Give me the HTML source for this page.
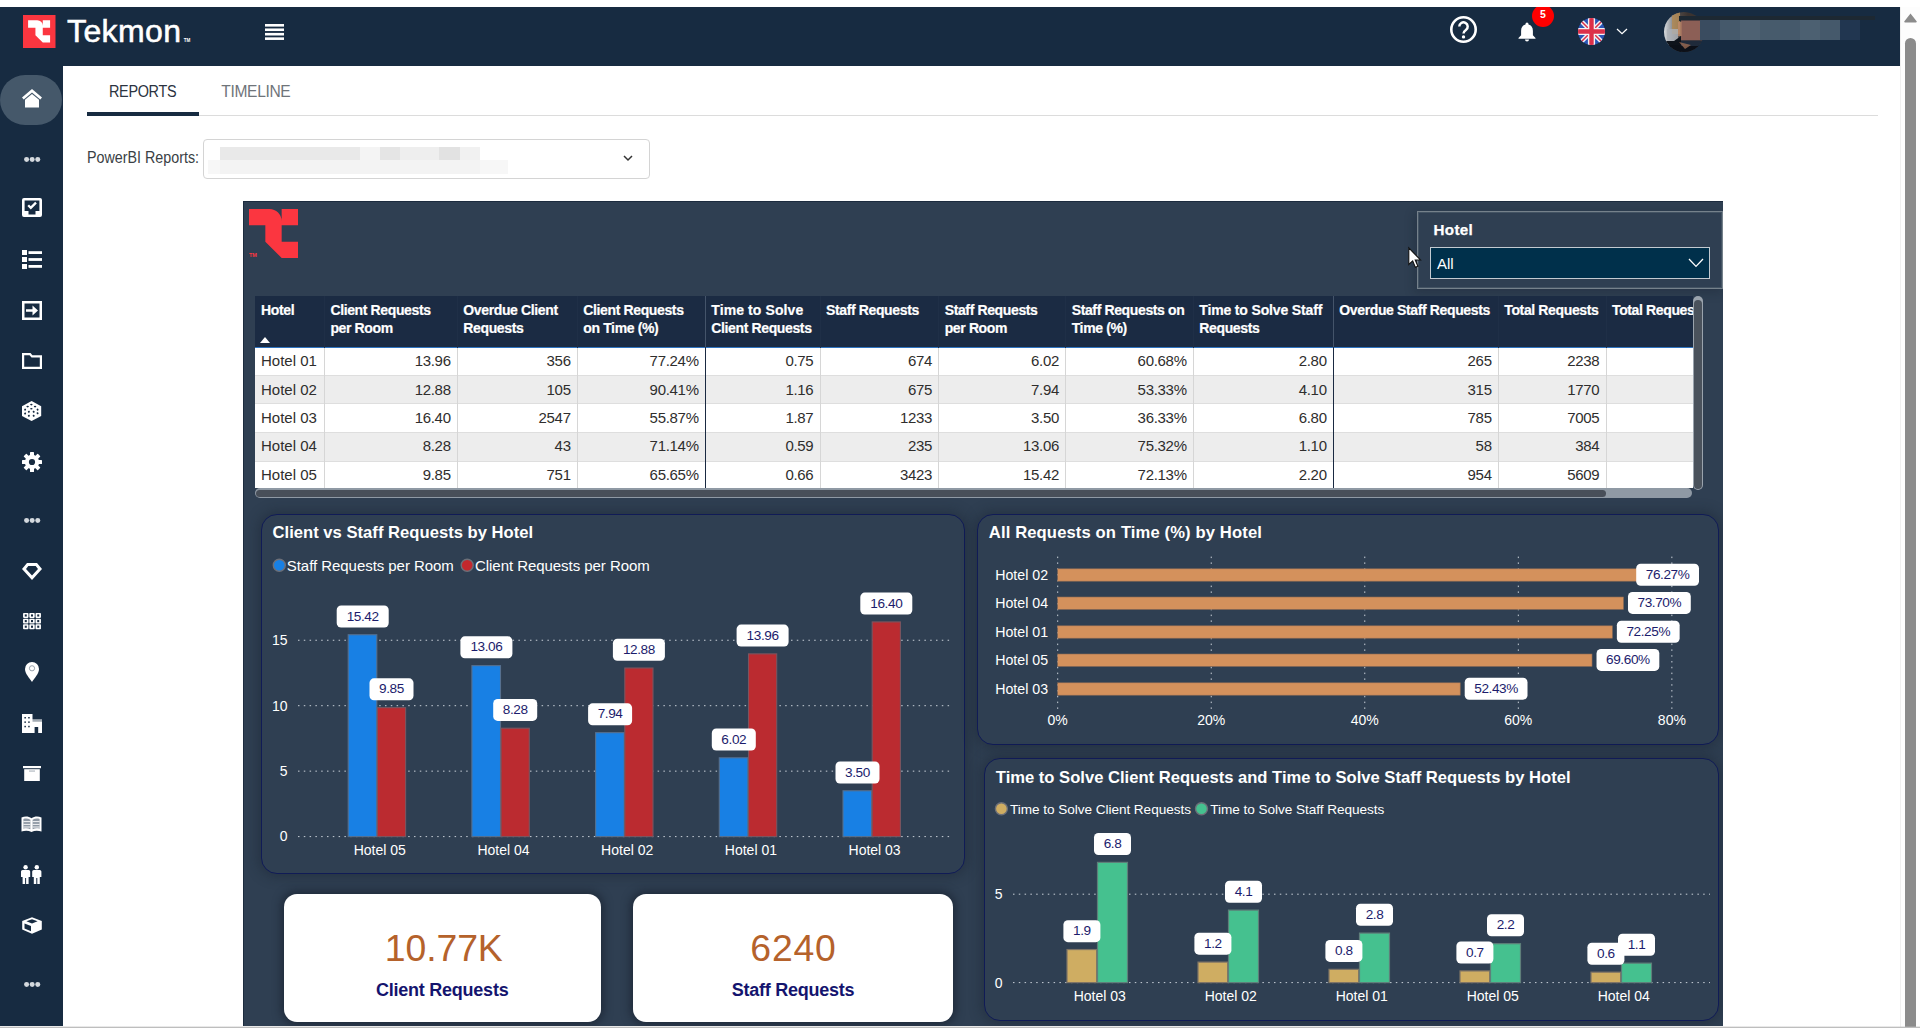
<!DOCTYPE html><html lang="en"><head><meta charset="utf-8"><title>Tekmon - Reports</title><style>
*{box-sizing:border-box;margin:0;padding:0}
html,body{width:1920px;height:1028px;overflow:hidden;background:#fff;font-family:"Liberation Sans", sans-serif;}
.abs{position:absolute}
#hdr{position:absolute;left:0;top:7px;width:1900px;height:59px;background:#172b41;overflow:hidden}
#side{position:absolute;left:0;top:66px;width:63px;height:960px;background:#172b41}
#sb{position:absolute;left:1900px;top:7px;width:20px;height:1021px;background:#fdfdfd;border-left:1px solid #efefef}
#thumb{position:absolute;left:1905px;top:38px;width:11px;height:1000px;border-radius:6px;background:#8b8b8b}
#botline{position:absolute;left:0;top:1026px;width:1920px;height:2px;background:linear-gradient(rgba(190,190,190,.35) 50%,#bebebe 50%)}
.t{position:absolute;white-space:nowrap;line-height:20px}
svg{position:absolute;overflow:visible}
svg text{font-family:"Liberation Sans", sans-serif;}
#report{position:absolute;left:243px;top:201px;width:1480px;height:825px;background:#2f3f52;overflow:hidden;border-left:1px solid #1c2b3e;border-top:1px solid #1c2b3e}
.panel{position:absolute;border:1px solid #101b56;border-radius:16px;background:#2f3f52;box-shadow:0 0 13px 2px rgba(22,30,42,.42)}
.card{position:absolute;background:#fff;border-radius:13px;box-shadow:0 0 9px 3px rgba(20,28,40,.55)}
</style></head><body>
<div id="hdr">
<svg style="left:23px;top:8px" width="33" height="33" viewBox="0 0 33 33"><rect width="32.5" height="33" fill="#fb3640"/><path transform="translate(5.1 5.2) scale(0.4583 0.4667)" d="M0 0 H20 A12 12 0 0 1 32 12 V0 H48 V16 H32 V32 H48 V48 H32 L16 32 V16 H0 Z" fill="#fff"/></svg>
<div class="t" style="left:67px;top:14.00px;font-size:32px;color:#fff;font-weight:normal;letter-spacing:0.4px;-webkit-text-stroke:0.55px #fff;">Tekmon</div>
<div class="t" style="left:183.8px;top:23.80px;font-size:4.6px;color:#fff;font-weight:bold;">TM</div>
<svg style="left:265px;top:17px" width="19" height="16" viewBox="0 0 19 16"><g fill="#fff"><rect y="0" width="19" height="2.6"/><rect y="4.45" width="19" height="2.6"/><rect y="8.9" width="19" height="2.6"/><rect y="13.35" width="19" height="2.6"/></g></svg>
<svg style="left:1449px;top:8px" width="29" height="29" viewBox="0 0 29 29"><circle cx="14.5" cy="14.5" r="12.2" fill="none" stroke="#fff" stroke-width="2.6"/><path d="M10.3 11.6 a4.2 4.2 0 1 1 6.6 3.4 c-1.6 1.1 -2.4 1.7 -2.4 3.6" fill="none" stroke="#fff" stroke-width="2.5" stroke-linecap="butt"/><circle cx="14.5" cy="21.9" r="1.7" fill="#fff"/></svg>
<svg style="left:1517px;top:15px" width="20" height="20" viewBox="0 0 20 20"><path d="M10 0.6 a1.5 1.5 0 0 1 1.5 1.5 v0.5 c2.9 0.7 4.4 3.1 4.4 6.1 v4.6 l2.6 2.6 v0.9 H1.5 v-0.9 l2.6 -2.6 V8.7 c0 -3 1.5 -5.4 4.4 -6.1 V2.1 A1.5 1.5 0 0 1 10 0.6 Z M8 17.6 h4 a2 2 0 0 1 -4 0 Z" fill="#fff"/></svg>
<div class="abs" style="left:1532px;top:-2px;width:22px;height:22px;border-radius:11px;background:#fe0000"></div>
<div class="t" style="left:1532px;top:-2.80px;font-size:10.5px;color:#fff;font-weight:bold;width:22px;text-align:center;">5</div>
<svg style="left:1578px;top:11px" width="27" height="27" viewBox="0 0 27 27"><defs><clipPath id="fc"><circle cx="13.5" cy="13.5" r="13.5"/></clipPath></defs><g clip-path="url(#fc)"><rect width="27" height="27" fill="#2a55b5"/><path d="M0 0 L27 27 M27 0 L0 27" stroke="#f3f3f5" stroke-width="4.4"/><path d="M0 0 L27 27 M27 0 L0 27" stroke="#d9304a" stroke-width="1.5"/><path d="M13.5 0 V27 M0 13.5 H27" stroke="#f3f3f5" stroke-width="7.2"/><path d="M13.5 0 V27 M0 13.5 H27" stroke="#dc3049" stroke-width="4.4"/></g></svg>
<svg style="left:1616px;top:21px" width="12" height="7" viewBox="0 0 12 7"><path d="M1 1 L6 5.6 L11 1" fill="none" stroke="#fff" stroke-width="1.25"/></svg>
<svg style="left:1664px;top:4.5px" width="40" height="40" viewBox="0 0 40 40"><defs><clipPath id="ac"><circle cx="20" cy="20" r="20"/></clipPath><linearGradient id="ag" x1="0" x2="1" y1="0" y2="0"><stop offset="0" stop-color="#d9dcdf"/><stop offset=".2" stop-color="#8f9296"/><stop offset=".42" stop-color="#4a4340"/><stop offset=".6" stop-color="#3b3330"/></linearGradient></defs><g clip-path="url(#ac)"><rect width="40" height="40" fill="url(#ag)"/><rect x="8" y="0" width="8" height="22" fill="#b08a55" opacity=".85"/><rect x="3" y="17" width="11" height="12" fill="#aeb2b8" opacity=".8"/><path d="M0 29 H10 L17 24 V40 H0 Z" fill="#0e131b"/><rect x="0" y="33" width="40" height="7" fill="#0c1018"/><rect x="15" y="4" width="25" height="5" fill="#1a2530"/><rect x="17" y="8.5" width="23" height="20" fill="#8c5f56"/><rect x="14" y="10" width="3.5" height="14" fill="#c08a6a" opacity=".8"/><rect x="17" y="28.5" width="23" height="5.5" fill="#1f2a3a"/><path d="M15 30 L21 37 L27 33 Z" fill="#9a6a52" opacity=".8"/></g></svg>
<div class="abs" style="left:1700px;top:13px;width:20px;height:20px;background:#3a4c60"></div>
<div class="abs" style="left:1720px;top:13px;width:20px;height:20px;background:#45596b"></div>
<div class="abs" style="left:1740px;top:13px;width:20px;height:20px;background:#4e6172"></div>
<div class="abs" style="left:1760px;top:13px;width:20px;height:20px;background:#475b6c"></div>
<div class="abs" style="left:1780px;top:13px;width:20px;height:20px;background:#45596b"></div>
<div class="abs" style="left:1800px;top:13px;width:20px;height:20px;background:#4c6071"></div>
<div class="abs" style="left:1820px;top:13px;width:20px;height:20px;background:#45596b"></div>
<div class="abs" style="left:1840px;top:13px;width:20px;height:20px;background:#213650"></div>
<div class="abs" style="left:1679px;top:9px;width:196px;height:4px;background:#1d2832"></div>
</div>
<div id="side"></div>
<div class="abs" style="left:0;top:75px;width:62px;height:50px;border-radius:25px;background:#45586a"></div>
<svg style="left:21.8px;top:89.1px" width="20" height="18.4" viewBox="0 0 20 18.4"><path d="M10 0 L20 8.6 L18.3 10.6 L10 3.6 L1.7 10.6 L0 8.6 Z" fill="#fff"/><path d="M10 4.9 L17 10.8 V18.4 H3 V10.8 Z" fill="#fff"/></svg>
<svg style="left:23.5px;top:156.6px" width="16.4" height="5.2" viewBox="0 0 16.4 5.2"><g fill="#d4d9de"><circle cx="2.6" cy="2.6" r="2.5"/><circle cx="8.2" cy="2.6" r="2.5"/><circle cx="13.8" cy="2.6" r="2.5"/></g></svg>
<svg style="left:21.5px;top:198.0px" width="20" height="19" viewBox="0 0 20 19"><path d="M2 0 H18 a2 2 0 0 1 2 2 V17 a2 2 0 0 1 -2 2 H2 a2 2 0 0 1 -2 -2 V2 a2 2 0 0 1 2 -2 Z M2.6 2.6 V13 H6.5 V16.4 H13.5 V13 H17.4 V2.6 Z" fill="#fff" fill-rule="evenodd"/><path d="M6.2 7.3 L8.8 9.9 L14 4.6" fill="none" stroke="#fff" stroke-width="2.3"/></svg>
<svg style="left:21.5px;top:249.5px" width="20" height="19" viewBox="0 0 20 19"><g fill="#fff"><rect x="0" y="0" width="5" height="5"/><rect x="0" y="7" width="5" height="5"/><rect x="0" y="14" width="5" height="5"/><rect x="6.5" y="1.2" width="13.5" height="2.8"/><rect x="6.5" y="8.1" width="13.5" height="2.8"/><rect x="6.5" y="15" width="13.5" height="2.8"/></g></svg>
<svg style="left:21.5px;top:300.5px" width="20" height="19" viewBox="0 0 20 19"><path d="M0 0 H20 V19 H0 Z M2.5 2.5 V16.5 H17.5 V2.5 Z" fill="#fff" fill-rule="evenodd"/><path d="M4 8.2 H10.5 V4.6 L16 9.5 L10.5 14.4 V10.8 H4 Z" fill="#fff"/></svg>
<svg style="left:21.5px;top:352.5px" width="20" height="16" viewBox="0 0 20 16"><path d="M1.1 1.1 H8 L10 3.4 H18.9 V14.9 H1.1 Z" fill="none" stroke="#fff" stroke-width="2.2" stroke-linejoin="miter"/></svg>
<svg style="left:21.6px;top:400.8px" width="19.2" height="20.1" viewBox="0 0 19.2 20.1"><path d="M9.6 0 L19.2 5.2 V14.9 L9.6 20.1 L0 14.9 V5.2 Z" fill="#fff"/><g fill="#172b41"><ellipse cx="9.35" cy="3.6" rx="1.25" ry="0.8"/><ellipse cx="5.6" cy="5.6" rx="1.25" ry="0.8"/><ellipse cx="13.1" cy="5.6" rx="1.25" ry="0.8"/><ellipse cx="9.35" cy="7.8" rx="1.25" ry="0.8"/><ellipse cx="3.1" cy="8.6" rx="0.95" ry="1.05" transform="rotate(28 3.1 8.6)"/><ellipse cx="6.85" cy="10.75" rx="0.95" ry="1.05" transform="rotate(28 6.85 10.75)"/><ellipse cx="3.1" cy="12.5" rx="0.95" ry="1.05" transform="rotate(28 3.1 12.5)"/><ellipse cx="6.85" cy="14.8" rx="0.95" ry="1.05" transform="rotate(28 6.85 14.8)"/><ellipse cx="15.6" cy="8.6" rx="0.95" ry="1.05" transform="rotate(-28 15.6 8.6)"/><ellipse cx="11.7" cy="10.75" rx="0.95" ry="1.05" transform="rotate(-28 11.7 10.75)"/><ellipse cx="15.6" cy="12.3" rx="0.95" ry="1.05" transform="rotate(-28 15.6 12.3)"/><ellipse cx="11.7" cy="14.8" rx="0.95" ry="1.05" transform="rotate(-28 11.7 14.8)"/></g></svg>
<svg style="left:21.5px;top:452.0px" width="20" height="20" viewBox="0 0 20 20"><g fill="#fff"><rect x="8" y="0" width="4" height="20" rx="0.6" transform="rotate(0 10 10)"/><rect x="8" y="0" width="4" height="20" rx="0.6" transform="rotate(45 10 10)"/><rect x="8" y="0" width="4" height="20" rx="0.6" transform="rotate(90 10 10)"/><rect x="8" y="0" width="4" height="20" rx="0.6" transform="rotate(135 10 10)"/><circle cx="10" cy="10" r="7.2"/></g><circle cx="10" cy="10" r="3.1" fill="#172b41"/></svg>
<svg style="left:23.5px;top:518.4px" width="16.4" height="5.2" viewBox="0 0 16.4 5.2"><g fill="#d4d9de"><circle cx="2.6" cy="2.6" r="2.5"/><circle cx="8.2" cy="2.6" r="2.5"/><circle cx="13.8" cy="2.6" r="2.5"/></g></svg>
<svg style="left:21.5px;top:562.5px" width="20" height="17" viewBox="0 0 20 17"><path d="M5 0 H15 L20 6 L10 17 L0 6 Z M6.3 3 L4 6 L10 12.6 L16 6 L13.7 3 Z" fill="#fff" fill-rule="evenodd"/></svg>
<svg style="left:22.5px;top:612.9px" width="18" height="16.2" viewBox="0 0 17.8 16.1"><g fill="#fff"><rect x="0.0" y="0.0" width="5.4" height="4.9" rx="0.8"/><rect x="6.2" y="0.0" width="5.4" height="4.9" rx="0.8"/><rect x="12.4" y="0.0" width="5.4" height="4.9" rx="0.8"/><rect x="0.0" y="5.6" width="5.4" height="4.9" rx="0.8"/><rect x="6.2" y="5.6" width="5.4" height="4.9" rx="0.8"/><rect x="12.4" y="5.6" width="5.4" height="4.9" rx="0.8"/><rect x="0.0" y="11.2" width="5.4" height="4.9" rx="0.8"/><rect x="6.2" y="11.2" width="5.4" height="4.9" rx="0.8"/><rect x="12.4" y="11.2" width="5.4" height="4.9" rx="0.8"/></g><g fill="#172b41"><rect x="1.7" y="1.4" width="2" height="2.1"/><rect x="7.9" y="1.4" width="2" height="2.1"/><rect x="14.1" y="1.4" width="2" height="2.1"/><rect x="1.7" y="7.0" width="2" height="2.1"/><rect x="7.9" y="7.0" width="2" height="2.1"/><rect x="14.1" y="7.0" width="2" height="2.1"/><rect x="1.7" y="12.6" width="2" height="2.1"/><rect x="7.9" y="12.6" width="2" height="2.1"/><rect x="14.1" y="12.6" width="2" height="2.1"/></g></svg>
<svg style="left:24.5px;top:662.0px" width="14" height="20" viewBox="0 0 14 20"><path d="M7 0 a7 7 0 0 1 7 7 c0 4.6 -4.6 9.3 -7 13 c-2.4 -3.7 -7 -8.4 -7 -13 a7 7 0 0 1 7 -7 Z" fill="#fff"/><circle cx="7" cy="6.3" r="2.6" fill="#fff" stroke="#8d97a3" stroke-width="0.9"/></svg>
<svg style="left:21.5px;top:713.5px" width="20" height="19" viewBox="0 0 20 19"><path d="M0 0 H10.5 V5.5 H20 V19 H16.2 V13 H12.6 V19 H0 Z" fill="#fff"/><g fill="#172b41"><rect x="2.4" y="3" width="1.5" height="1.5"/><rect x="6.2" y="3" width="1.5" height="1.5"/><rect x="2.4" y="7.4" width="1.5" height="1.5"/><rect x="6.2" y="7.4" width="1.5" height="1.5"/><rect x="2.4" y="11.8" width="1.5" height="1.5"/><rect x="6.2" y="11.8" width="1.5" height="1.5"/><rect x="10.5" y="6.6" width="9.5" height="0.7"/></g></svg>
<svg style="left:22.5px;top:765.5px" width="18" height="15" viewBox="0 0 18 15"><rect x="0" y="0" width="18" height="2.2" fill="#fff"/><rect x="1.2" y="3.2" width="15.6" height="11.8" fill="#fff"/><rect x="6" y="4.6" width="6" height="0.9" fill="#9aa3ad"/></svg>
<svg style="left:21.0px;top:816.0px" width="21" height="16" viewBox="0 0 21 16"><path d="M0.5 1.6 C4 0 7.5 0.3 10.5 2.2 C13.5 0.3 17 0 20.5 1.6 V15.6 C17 14.2 13.5 14.4 10.5 16 C7.5 14.4 4 14.2 0.5 15.6 Z" fill="#fff"/><path d="M2.4 3 C4.8 2.2 7 2.5 9.4 3.7 V13.2 C7 12.2 4.8 12 2.4 12.7 Z M18.6 3 C16.2 2.2 14 2.5 11.6 3.7 V13.2 C14 12.2 16.2 12 18.6 12.7 Z" fill="#8e98a4"/><g stroke="#fff" stroke-width="0.9"><path d="M2.4 5.6 H9.4 M2.4 8.4 H9.4 M2.4 11 H9.4 M11.6 5.6 H18.6 M11.6 8.4 H18.6 M11.6 11 H18.6"/></g></svg>
<svg style="left:21.3px;top:864.5px" width="20.4" height="19" viewBox="0 0 20.4 19"><g fill="#fff"><circle cx="4.6" cy="2.2" r="2.2"/><path d="M1.6 5 H7.6 a1.6 1.6 0 0 1 1.6 1.6 V12 H7.6 V19 H5.1 V13 H4.1 V19 H1.6 V12 H0 V6.6 A1.6 1.6 0 0 1 1.6 5 Z"/><g transform="translate(11.2 0)"><circle cx="4.6" cy="2.2" r="2.2"/><path d="M1.6 5 H7.6 a1.6 1.6 0 0 1 1.6 1.6 V12 H7.6 V19 H5.1 V13 H4.1 V19 H1.6 V12 H0 V6.6 A1.6 1.6 0 0 1 1.6 5 Z"/></g></g></svg>
<svg style="left:21.5px;top:916.5px" width="20" height="17" viewBox="0 0 20 17"><path d="M10 0.2 L19.8 4 V12.6 L10 16.8 L0.2 12.6 V4 Z" fill="#fff"/><path d="M2.5 6.4 L9 9.1 V14.2 L2.5 11.5 Z" fill="#172b41"/><path d="M4.4 4.3 L10 2.2 L15.6 4.3 L10 6.6 Z" fill="#172b41"/></svg>
<svg style="left:23.5px;top:981.9px" width="16.4" height="5.2" viewBox="0 0 16.4 5.2"><g fill="#d4d9de"><circle cx="2.6" cy="2.6" r="2.5"/><circle cx="8.2" cy="2.6" r="2.5"/><circle cx="13.8" cy="2.6" r="2.5"/></g></svg>
<div id="sb"></div><div id="thumb"></div>
<svg style="left:1904px;top:13px" width="13" height="10" viewBox="0 0 13 10"><path d="M6.5 0.6 L12.6 8.2 a0.8 0.8 0 0 1 -0.6 1.3 H1 a0.8 0.8 0 0 1 -0.6 -1.3 Z" fill="#8b8b8b"/></svg>
<div class="abs" style="left:87px;top:115px;width:1791px;height:1px;background:#dcdcdc"></div>
<div class="abs" style="left:87px;top:112px;width:112px;height:4px;background:#172b41"></div>
<div class="t" style="left:108.6px;top:81.60px;font-size:15.6px;color:#2b3340;font-weight:normal;letter-spacing:-0.35px;transform:scaleX(0.925);transform-origin:0 50%;">REPORTS</div>
<div class="t" style="left:221.3px;top:81.60px;font-size:15.6px;color:#6f747a;font-weight:normal;letter-spacing:-0.35px;">TIMELINE</div>
<div class="t" style="left:86.6px;top:147.60px;font-size:15.6px;color:#3a3f45;font-weight:normal;transform:scaleX(0.917);transform-origin:0 50%;">PowerBI Reports:</div>
<div class="abs" style="left:203px;top:139px;width:447px;height:40px;border:1px solid #d4d4d4;border-radius:4px;background:#fff"></div>
<div class="abs" style="left:220px;top:147px;width:140px;height:12.5px;background:#e9e9e9"></div>
<div class="abs" style="left:360px;top:147px;width:20px;height:12.5px;background:#f4f4f4"></div>
<div class="abs" style="left:380px;top:147px;width:20px;height:12.5px;background:#e5e5e5"></div>
<div class="abs" style="left:400px;top:147px;width:39px;height:12.5px;background:#eeeeee"></div>
<div class="abs" style="left:439px;top:147px;width:21px;height:12.5px;background:#e2e2e2"></div>
<div class="abs" style="left:460px;top:147px;width:20px;height:12.5px;background:#f1f1f1"></div>
<div class="abs" style="left:208px;top:159.5px;width:300px;height:14px;background:#f7f7f7"></div>
<div class="abs" style="left:220px;top:159.5px;width:260px;height:14px;background:#f3f3f3"></div>
<svg style="left:623px;top:155px" width="10" height="7" viewBox="0 0 10 7"><path d="M1 1 L5 5 L9 1" fill="none" stroke="#333" stroke-width="1.5"/></svg>
<div id="report">
<svg style="left:5px;top:7px" width="49" height="49" viewBox="0 0 48 48"><path d="M0 0 H20 A12 12 0 0 1 32 12 V0 H48 V16 H32 V32 H48 V48 H32 L16 32 V16 H0 Z" fill="#fb3640"/></svg>
<div class="t" style="left:5px;top:42.90px;font-size:5.5px;color:#fb3640;font-weight:bold;">TM</div>
<div class="abs" style="left:1173px;top:9px;width:305.5999999999999px;height:78.39999999999998px;border:1px solid #75818b;background:#2f3f52;box-shadow:-2px 3px 9px 1px rgba(20,28,40,.25), inset 0 0 0 1px rgba(117,129,139,.3)"></div>
<div class="t" style="left:1189.6px;top:17.80px;font-size:15.2px;color:#fff;font-weight:bold;letter-spacing:0.3px;-webkit-text-stroke:0.25px #fff;">Hotel</div>
<div class="abs" style="left:1186px;top:45px;width:280px;height:32px;border:1px solid #c3cad1;background:#00304b"></div>
<div class="t" style="left:1193px;top:52.10px;font-size:15px;color:#fff;font-weight:normal;">All</div>
<svg style="left:1444px;top:56px" width="16" height="10" viewBox="0 0 16 10"><path d="M1 1 L8 8.4 L15 1" fill="none" stroke="#fff" stroke-width="1.3"/></svg>
<svg style="left:1164.4px;top:44.80000000000001px" width="13.4" height="22.4" viewBox="0 0 12 20"><path d="M0.7 0.8 V15.6 L4.2 12.4 L6.6 18.2 L8.9 17.2 L6.5 11.6 H11.2 Z" fill="#fff" stroke="#111" stroke-width="1"/></svg>
<div class="abs" style="left:11px;top:94px;width:1437.5px;height:192px;overflow:hidden;background:#fff">
<div class="abs" style="left:0;top:0;width:1437.5px;height:51px;background:#1b2b43"></div>
<div class="abs" style="left:0;top:51px;width:1437.5px;height:1.5px;background:#2f74c0"></div>
<div class="abs" style="left:0;top:52px;width:1437.5px;height:27.5px;background:#fff"></div>
<div class="abs" style="left:0;top:79.5px;width:1437.5px;height:28.0px;background:#ededed"></div>
<div class="abs" style="left:0;top:107.5px;width:1437.5px;height:28.5px;background:#fff"></div>
<div class="abs" style="left:0;top:136px;width:1437.5px;height:29px;background:#ededed"></div>
<div class="abs" style="left:0;top:165px;width:1437.5px;height:29px;background:#fff"></div>
<div class="abs" style="left:0;top:79.0px;width:1437.5px;height:1px;background:#dedede"></div>
<div class="abs" style="left:0;top:107.0px;width:1437.5px;height:1px;background:#dedede"></div>
<div class="abs" style="left:0;top:135.5px;width:1437.5px;height:1px;background:#dedede"></div>
<div class="abs" style="left:0;top:164.5px;width:1437.5px;height:1px;background:#dedede"></div>
<div class="abs" style="left:68.89999999999998px;top:0;width:1px;height:52px;background:#1f2f47"></div>
<div class="abs" style="left:68.89999999999998px;top:52px;width:1px;height:150px;background:#d6d6d6"></div>
<div class="abs" style="left:201.8px;top:0;width:1px;height:52px;background:#1f2f47"></div>
<div class="abs" style="left:201.8px;top:52px;width:1px;height:150px;background:#d6d6d6"></div>
<div class="abs" style="left:321.79999999999995px;top:0;width:1px;height:52px;background:#1f2f47"></div>
<div class="abs" style="left:321.79999999999995px;top:52px;width:1px;height:150px;background:#d6d6d6"></div>
<div class="abs" style="left:449.79999999999995px;top:0;width:1px;height:52px;background:#1f2f47"></div>
<div class="abs" style="left:449.54999999999995px;top:52px;width:1.5px;height:150px;background:#1a2a42"></div>
<div class="abs" style="left:449.54999999999995px;top:0px;width:1.5px;height:51px;background:#44546a"></div>
<div class="abs" style="left:564.5px;top:0;width:1px;height:52px;background:#1f2f47"></div>
<div class="abs" style="left:564.5px;top:52px;width:1px;height:150px;background:#d6d6d6"></div>
<div class="abs" style="left:683.2px;top:0;width:1px;height:52px;background:#1f2f47"></div>
<div class="abs" style="left:683.2px;top:52px;width:1px;height:150px;background:#d6d6d6"></div>
<div class="abs" style="left:810.2px;top:0;width:1px;height:52px;background:#1f2f47"></div>
<div class="abs" style="left:810.2px;top:52px;width:1px;height:150px;background:#d6d6d6"></div>
<div class="abs" style="left:937.8px;top:0;width:1px;height:52px;background:#1f2f47"></div>
<div class="abs" style="left:937.8px;top:52px;width:1px;height:150px;background:#d6d6d6"></div>
<div class="abs" style="left:1077.8px;top:0;width:1px;height:52px;background:#1f2f47"></div>
<div class="abs" style="left:1077.55px;top:52px;width:1.5px;height:150px;background:#1a2a42"></div>
<div class="abs" style="left:1077.55px;top:0px;width:1.5px;height:51px;background:#44546a"></div>
<div class="abs" style="left:1242.8px;top:0;width:1px;height:52px;background:#1f2f47"></div>
<div class="abs" style="left:1242.8px;top:52px;width:1px;height:150px;background:#d6d6d6"></div>
<div class="abs" style="left:1350.5px;top:0;width:1px;height:52px;background:#1f2f47"></div>
<div class="abs" style="left:1350.5px;top:52px;width:1px;height:150px;background:#d6d6d6"></div>
<div class="t" style="left:6px;top:4.20px;font-size:14px;color:#fff;font-weight:bold;letter-spacing:-0.37px;-webkit-text-stroke:0.2px #fff;">Hotel</div>
<div class="t" style="left:75.39999999999998px;top:4.20px;font-size:14px;color:#fff;font-weight:bold;letter-spacing:-0.37px;-webkit-text-stroke:0.2px #fff;">Client Requests</div>
<div class="t" style="left:75.39999999999998px;top:22.20px;font-size:14px;color:#fff;font-weight:bold;letter-spacing:-0.37px;-webkit-text-stroke:0.2px #fff;">per Room</div>
<div class="t" style="left:208.3px;top:4.20px;font-size:14px;color:#fff;font-weight:bold;letter-spacing:-0.37px;-webkit-text-stroke:0.2px #fff;">Overdue Client</div>
<div class="t" style="left:208.3px;top:22.20px;font-size:14px;color:#fff;font-weight:bold;letter-spacing:-0.37px;-webkit-text-stroke:0.2px #fff;">Requests</div>
<div class="t" style="left:328.29999999999995px;top:4.20px;font-size:14px;color:#fff;font-weight:bold;letter-spacing:-0.37px;-webkit-text-stroke:0.2px #fff;">Client Requests</div>
<div class="t" style="left:328.29999999999995px;top:22.20px;font-size:14px;color:#fff;font-weight:bold;letter-spacing:-0.37px;-webkit-text-stroke:0.2px #fff;">on Time (%)</div>
<div class="t" style="left:456.29999999999995px;top:4.20px;font-size:14px;color:#fff;font-weight:bold;letter-spacing:0.1px;-webkit-text-stroke:0.2px #fff;">Time to Solve</div>
<div class="t" style="left:456.29999999999995px;top:22.20px;font-size:14px;color:#fff;font-weight:bold;letter-spacing:-0.37px;-webkit-text-stroke:0.2px #fff;">Client Requests</div>
<div class="t" style="left:571px;top:4.20px;font-size:14px;color:#fff;font-weight:bold;letter-spacing:-0.37px;-webkit-text-stroke:0.2px #fff;">Staff Requests</div>
<div class="t" style="left:689.7px;top:4.20px;font-size:14px;color:#fff;font-weight:bold;letter-spacing:-0.37px;-webkit-text-stroke:0.2px #fff;">Staff Requests</div>
<div class="t" style="left:689.7px;top:22.20px;font-size:14px;color:#fff;font-weight:bold;letter-spacing:-0.37px;-webkit-text-stroke:0.2px #fff;">per Room</div>
<div class="t" style="left:816.7px;top:4.20px;font-size:14px;color:#fff;font-weight:bold;letter-spacing:-0.37px;-webkit-text-stroke:0.2px #fff;">Staff Requests on</div>
<div class="t" style="left:816.7px;top:22.20px;font-size:14px;color:#fff;font-weight:bold;letter-spacing:-0.37px;-webkit-text-stroke:0.2px #fff;">Time (%)</div>
<div class="t" style="left:944.3px;top:4.20px;font-size:14px;color:#fff;font-weight:bold;letter-spacing:-0.15px;-webkit-text-stroke:0.2px #fff;">Time to Solve Staff</div>
<div class="t" style="left:944.3px;top:22.20px;font-size:14px;color:#fff;font-weight:bold;letter-spacing:-0.37px;-webkit-text-stroke:0.2px #fff;">Requests</div>
<div class="t" style="left:1084.3px;top:4.20px;font-size:14px;color:#fff;font-weight:bold;letter-spacing:-0.37px;-webkit-text-stroke:0.2px #fff;">Overdue Staff Requests</div>
<div class="t" style="left:1249.3px;top:4.20px;font-size:14px;color:#fff;font-weight:bold;letter-spacing:-0.37px;-webkit-text-stroke:0.2px #fff;">Total Requests</div>
<div class="t" style="left:1357px;top:4.20px;font-size:14px;color:#fff;font-weight:bold;letter-spacing:-0.37px;-webkit-text-stroke:0.2px #fff;">Total Requests</div>
<svg style="left:5.3px;top:40.5px" width="10" height="6" viewBox="0 0 10 6"><path d="M0 6 L5 0 L10 6 Z" fill="#fff"/></svg>
<div class="t" style="left:6px;top:54.80px;font-size:15px;color:#2f2e2d;font-weight:normal;">Hotel 01</div>
<div class="t" style="left:69.39999999999998px;top:54.80px;font-size:15px;color:#2f2e2d;font-weight:normal;letter-spacing:-0.3px;width:126.60000000000004px;text-align:right;padding-right:0.3px;">13.96</div>
<div class="t" style="left:202.3px;top:54.80px;font-size:15px;color:#2f2e2d;font-weight:normal;letter-spacing:-0.3px;width:113.69999999999995px;text-align:right;padding-right:0.3px;">356</div>
<div class="t" style="left:322.29999999999995px;top:54.80px;font-size:15px;color:#2f2e2d;font-weight:normal;letter-spacing:-0.3px;width:121.7px;text-align:right;padding-right:0.3px;">77.24%</div>
<div class="t" style="left:450.29999999999995px;top:54.80px;font-size:15px;color:#2f2e2d;font-weight:normal;letter-spacing:-0.3px;width:108.40000000000005px;text-align:right;padding-right:0.3px;">0.75</div>
<div class="t" style="left:565px;top:54.80px;font-size:15px;color:#2f2e2d;font-weight:normal;letter-spacing:-0.3px;width:112.40000000000005px;text-align:right;padding-right:0.3px;">674</div>
<div class="t" style="left:683.7px;top:54.80px;font-size:15px;color:#2f2e2d;font-weight:normal;letter-spacing:-0.3px;width:120.7px;text-align:right;padding-right:0.3px;">6.02</div>
<div class="t" style="left:810.7px;top:54.80px;font-size:15px;color:#2f2e2d;font-weight:normal;letter-spacing:-0.3px;width:121.29999999999991px;text-align:right;padding-right:0.3px;">60.68%</div>
<div class="t" style="left:938.3px;top:54.80px;font-size:15px;color:#2f2e2d;font-weight:normal;letter-spacing:-0.3px;width:133.7px;text-align:right;padding-right:0.3px;">2.80</div>
<div class="t" style="left:1078.3px;top:54.80px;font-size:15px;color:#2f2e2d;font-weight:normal;letter-spacing:-0.3px;width:158.7px;text-align:right;padding-right:0.3px;">265</div>
<div class="t" style="left:1243.3px;top:54.80px;font-size:15px;color:#2f2e2d;font-weight:normal;letter-spacing:-0.3px;width:101.40000000000005px;text-align:right;padding-right:0.3px;">2238</div>
<div class="t" style="left:6px;top:83.60px;font-size:15px;color:#2f2e2d;font-weight:normal;">Hotel 02</div>
<div class="t" style="left:69.39999999999998px;top:83.60px;font-size:15px;color:#2f2e2d;font-weight:normal;letter-spacing:-0.3px;width:126.60000000000004px;text-align:right;padding-right:0.3px;">12.88</div>
<div class="t" style="left:202.3px;top:83.60px;font-size:15px;color:#2f2e2d;font-weight:normal;letter-spacing:-0.3px;width:113.69999999999995px;text-align:right;padding-right:0.3px;">105</div>
<div class="t" style="left:322.29999999999995px;top:83.60px;font-size:15px;color:#2f2e2d;font-weight:normal;letter-spacing:-0.3px;width:121.7px;text-align:right;padding-right:0.3px;">90.41%</div>
<div class="t" style="left:450.29999999999995px;top:83.60px;font-size:15px;color:#2f2e2d;font-weight:normal;letter-spacing:-0.3px;width:108.40000000000005px;text-align:right;padding-right:0.3px;">1.16</div>
<div class="t" style="left:565px;top:83.60px;font-size:15px;color:#2f2e2d;font-weight:normal;letter-spacing:-0.3px;width:112.40000000000005px;text-align:right;padding-right:0.3px;">675</div>
<div class="t" style="left:683.7px;top:83.60px;font-size:15px;color:#2f2e2d;font-weight:normal;letter-spacing:-0.3px;width:120.7px;text-align:right;padding-right:0.3px;">7.94</div>
<div class="t" style="left:810.7px;top:83.60px;font-size:15px;color:#2f2e2d;font-weight:normal;letter-spacing:-0.3px;width:121.29999999999991px;text-align:right;padding-right:0.3px;">53.33%</div>
<div class="t" style="left:938.3px;top:83.60px;font-size:15px;color:#2f2e2d;font-weight:normal;letter-spacing:-0.3px;width:133.7px;text-align:right;padding-right:0.3px;">4.10</div>
<div class="t" style="left:1078.3px;top:83.60px;font-size:15px;color:#2f2e2d;font-weight:normal;letter-spacing:-0.3px;width:158.7px;text-align:right;padding-right:0.3px;">315</div>
<div class="t" style="left:1243.3px;top:83.60px;font-size:15px;color:#2f2e2d;font-weight:normal;letter-spacing:-0.3px;width:101.40000000000005px;text-align:right;padding-right:0.3px;">1770</div>
<div class="t" style="left:6px;top:111.60px;font-size:15px;color:#2f2e2d;font-weight:normal;">Hotel 03</div>
<div class="t" style="left:69.39999999999998px;top:111.60px;font-size:15px;color:#2f2e2d;font-weight:normal;letter-spacing:-0.3px;width:126.60000000000004px;text-align:right;padding-right:0.3px;">16.40</div>
<div class="t" style="left:202.3px;top:111.60px;font-size:15px;color:#2f2e2d;font-weight:normal;letter-spacing:-0.3px;width:113.69999999999995px;text-align:right;padding-right:0.3px;">2547</div>
<div class="t" style="left:322.29999999999995px;top:111.60px;font-size:15px;color:#2f2e2d;font-weight:normal;letter-spacing:-0.3px;width:121.7px;text-align:right;padding-right:0.3px;">55.87%</div>
<div class="t" style="left:450.29999999999995px;top:111.60px;font-size:15px;color:#2f2e2d;font-weight:normal;letter-spacing:-0.3px;width:108.40000000000005px;text-align:right;padding-right:0.3px;">1.87</div>
<div class="t" style="left:565px;top:111.60px;font-size:15px;color:#2f2e2d;font-weight:normal;letter-spacing:-0.3px;width:112.40000000000005px;text-align:right;padding-right:0.3px;">1233</div>
<div class="t" style="left:683.7px;top:111.60px;font-size:15px;color:#2f2e2d;font-weight:normal;letter-spacing:-0.3px;width:120.7px;text-align:right;padding-right:0.3px;">3.50</div>
<div class="t" style="left:810.7px;top:111.60px;font-size:15px;color:#2f2e2d;font-weight:normal;letter-spacing:-0.3px;width:121.29999999999991px;text-align:right;padding-right:0.3px;">36.33%</div>
<div class="t" style="left:938.3px;top:111.60px;font-size:15px;color:#2f2e2d;font-weight:normal;letter-spacing:-0.3px;width:133.7px;text-align:right;padding-right:0.3px;">6.80</div>
<div class="t" style="left:1078.3px;top:111.60px;font-size:15px;color:#2f2e2d;font-weight:normal;letter-spacing:-0.3px;width:158.7px;text-align:right;padding-right:0.3px;">785</div>
<div class="t" style="left:1243.3px;top:111.60px;font-size:15px;color:#2f2e2d;font-weight:normal;letter-spacing:-0.3px;width:101.40000000000005px;text-align:right;padding-right:0.3px;">7005</div>
<div class="t" style="left:6px;top:140.20px;font-size:15px;color:#2f2e2d;font-weight:normal;">Hotel 04</div>
<div class="t" style="left:69.39999999999998px;top:140.20px;font-size:15px;color:#2f2e2d;font-weight:normal;letter-spacing:-0.3px;width:126.60000000000004px;text-align:right;padding-right:0.3px;">8.28</div>
<div class="t" style="left:202.3px;top:140.20px;font-size:15px;color:#2f2e2d;font-weight:normal;letter-spacing:-0.3px;width:113.69999999999995px;text-align:right;padding-right:0.3px;">43</div>
<div class="t" style="left:322.29999999999995px;top:140.20px;font-size:15px;color:#2f2e2d;font-weight:normal;letter-spacing:-0.3px;width:121.7px;text-align:right;padding-right:0.3px;">71.14%</div>
<div class="t" style="left:450.29999999999995px;top:140.20px;font-size:15px;color:#2f2e2d;font-weight:normal;letter-spacing:-0.3px;width:108.40000000000005px;text-align:right;padding-right:0.3px;">0.59</div>
<div class="t" style="left:565px;top:140.20px;font-size:15px;color:#2f2e2d;font-weight:normal;letter-spacing:-0.3px;width:112.40000000000005px;text-align:right;padding-right:0.3px;">235</div>
<div class="t" style="left:683.7px;top:140.20px;font-size:15px;color:#2f2e2d;font-weight:normal;letter-spacing:-0.3px;width:120.7px;text-align:right;padding-right:0.3px;">13.06</div>
<div class="t" style="left:810.7px;top:140.20px;font-size:15px;color:#2f2e2d;font-weight:normal;letter-spacing:-0.3px;width:121.29999999999991px;text-align:right;padding-right:0.3px;">75.32%</div>
<div class="t" style="left:938.3px;top:140.20px;font-size:15px;color:#2f2e2d;font-weight:normal;letter-spacing:-0.3px;width:133.7px;text-align:right;padding-right:0.3px;">1.10</div>
<div class="t" style="left:1078.3px;top:140.20px;font-size:15px;color:#2f2e2d;font-weight:normal;letter-spacing:-0.3px;width:158.7px;text-align:right;padding-right:0.3px;">58</div>
<div class="t" style="left:1243.3px;top:140.20px;font-size:15px;color:#2f2e2d;font-weight:normal;letter-spacing:-0.3px;width:101.40000000000005px;text-align:right;padding-right:0.3px;">384</div>
<div class="t" style="left:6px;top:169.20px;font-size:15px;color:#2f2e2d;font-weight:normal;">Hotel 05</div>
<div class="t" style="left:69.39999999999998px;top:169.20px;font-size:15px;color:#2f2e2d;font-weight:normal;letter-spacing:-0.3px;width:126.60000000000004px;text-align:right;padding-right:0.3px;">9.85</div>
<div class="t" style="left:202.3px;top:169.20px;font-size:15px;color:#2f2e2d;font-weight:normal;letter-spacing:-0.3px;width:113.69999999999995px;text-align:right;padding-right:0.3px;">751</div>
<div class="t" style="left:322.29999999999995px;top:169.20px;font-size:15px;color:#2f2e2d;font-weight:normal;letter-spacing:-0.3px;width:121.7px;text-align:right;padding-right:0.3px;">65.65%</div>
<div class="t" style="left:450.29999999999995px;top:169.20px;font-size:15px;color:#2f2e2d;font-weight:normal;letter-spacing:-0.3px;width:108.40000000000005px;text-align:right;padding-right:0.3px;">0.66</div>
<div class="t" style="left:565px;top:169.20px;font-size:15px;color:#2f2e2d;font-weight:normal;letter-spacing:-0.3px;width:112.40000000000005px;text-align:right;padding-right:0.3px;">3423</div>
<div class="t" style="left:683.7px;top:169.20px;font-size:15px;color:#2f2e2d;font-weight:normal;letter-spacing:-0.3px;width:120.7px;text-align:right;padding-right:0.3px;">15.42</div>
<div class="t" style="left:810.7px;top:169.20px;font-size:15px;color:#2f2e2d;font-weight:normal;letter-spacing:-0.3px;width:121.29999999999991px;text-align:right;padding-right:0.3px;">72.13%</div>
<div class="t" style="left:938.3px;top:169.20px;font-size:15px;color:#2f2e2d;font-weight:normal;letter-spacing:-0.3px;width:133.7px;text-align:right;padding-right:0.3px;">2.20</div>
<div class="t" style="left:1078.3px;top:169.20px;font-size:15px;color:#2f2e2d;font-weight:normal;letter-spacing:-0.3px;width:158.7px;text-align:right;padding-right:0.3px;">954</div>
<div class="t" style="left:1243.3px;top:169.20px;font-size:15px;color:#2f2e2d;font-weight:normal;letter-spacing:-0.3px;width:101.40000000000005px;text-align:right;padding-right:0.3px;">5609</div>
</div>
<div class="abs" style="left:1449px;top:94px;width:10px;height:194px;border-radius:5px;background:#9aa3ad"></div>
<div class="abs" style="left:1450px;top:98px;width:8px;height:189px;border-radius:4px;background:#4a525c"></div>
<div class="abs" style="left:11px;top:286.4px;width:1437px;height:10px;border-radius:5px;background:#8f99a4"></div>
<div class="abs" style="left:12.199999999999989px;top:287.8px;width:1350px;height:7.4px;border-radius:3.7px;background:#484f59"></div>
<div class="panel" style="left:17px;top:311.5px;width:704px;height:360.0px"></div>
<div class="panel" style="left:733.4px;top:311.5px;width:741.6px;height:231.5px"></div>
<div class="panel" style="left:740px;top:556px;width:735px;height:263px"></div>
<div class="card" style="left:39.5px;top:692px;width:317.5px;height:128px"></div>
<div class="card" style="left:389px;top:692px;width:320px;height:128px"></div>
<svg style="left:0;top:0" width="1480" height="826" viewBox="244 202 1480 826">
<text x="272.50" y="538.05" font-size="16.6" fill="#fff" font-weight="bold" text-anchor="start" letter-spacing="0.02">Client vs Staff Requests by Hotel</text>
<circle cx="279.3" cy="565.3" r="6" fill="#1880e4" stroke="#6c6f78" stroke-width="1.4"/>
<text x="286.80" y="571.07" font-size="15" fill="#fff" font-weight="normal" text-anchor="start" letter-spacing="-0.05">Staff Requests per Room</text>
<circle cx="467.2" cy="565.3" r="6" fill="#c3282d" stroke="#6c6f78" stroke-width="1.4"/>
<text x="475.00" y="571.07" font-size="15" fill="#fff" font-weight="normal" text-anchor="start" letter-spacing="-0.05">Client Requests per Room</text>
<line x1="298" y1="836.60" x2="953" y2="836.60" stroke="#c9d0d8" stroke-width="1" stroke-dasharray="1.5 4.3" stroke-linecap="butt"/>
<text x="287.50" y="840.70" font-size="14" fill="#fff" font-weight="normal" text-anchor="end">0</text>
<line x1="298" y1="771.15" x2="953" y2="771.15" stroke="#c9d0d8" stroke-width="1" stroke-dasharray="1.5 4.3" stroke-linecap="butt"/>
<text x="287.50" y="776.05" font-size="14" fill="#fff" font-weight="normal" text-anchor="end">5</text>
<line x1="298" y1="705.70" x2="953" y2="705.70" stroke="#c9d0d8" stroke-width="1" stroke-dasharray="1.5 4.3" stroke-linecap="butt"/>
<text x="287.50" y="710.60" font-size="14" fill="#fff" font-weight="normal" text-anchor="end">10</text>
<line x1="298" y1="640.25" x2="953" y2="640.25" stroke="#c9d0d8" stroke-width="1" stroke-dasharray="1.5 4.3" stroke-linecap="butt"/>
<text x="287.50" y="645.15" font-size="14" fill="#fff" font-weight="normal" text-anchor="end">15</text>
<rect x="348.20" y="634.75" width="28.6" height="201.85" fill="#1880e4" stroke="#56708f" stroke-width="1.1"/>
<rect x="377.40" y="707.66" width="28.2" height="128.94" fill="#bb2b30" stroke="#7a5560" stroke-width="1.1"/>
<text x="379.80" y="855.10" font-size="14" fill="#fff" font-weight="normal" text-anchor="middle">Hotel 05</text>
<rect x="471.90" y="665.64" width="28.6" height="170.96" fill="#1880e4" stroke="#56708f" stroke-width="1.1"/>
<rect x="501.10" y="728.21" width="28.2" height="108.39" fill="#bb2b30" stroke="#7a5560" stroke-width="1.1"/>
<text x="503.50" y="855.10" font-size="14" fill="#fff" font-weight="normal" text-anchor="middle">Hotel 04</text>
<rect x="595.60" y="732.67" width="28.6" height="103.93" fill="#1880e4" stroke="#56708f" stroke-width="1.1"/>
<rect x="624.80" y="668.00" width="28.2" height="168.60" fill="#bb2b30" stroke="#7a5560" stroke-width="1.1"/>
<text x="627.20" y="855.10" font-size="14" fill="#fff" font-weight="normal" text-anchor="middle">Hotel 02</text>
<rect x="719.30" y="757.80" width="28.6" height="78.80" fill="#1880e4" stroke="#56708f" stroke-width="1.1"/>
<rect x="748.50" y="653.86" width="28.2" height="182.74" fill="#bb2b30" stroke="#7a5560" stroke-width="1.1"/>
<text x="750.90" y="855.10" font-size="14" fill="#fff" font-weight="normal" text-anchor="middle">Hotel 01</text>
<rect x="843.00" y="790.79" width="28.6" height="45.81" fill="#1880e4" stroke="#56708f" stroke-width="1.1"/>
<rect x="872.20" y="621.92" width="28.2" height="214.68" fill="#bb2b30" stroke="#7a5560" stroke-width="1.1"/>
<text x="874.60" y="855.10" font-size="14" fill="#fff" font-weight="normal" text-anchor="middle">Hotel 03</text>
<rect x="336.70" y="605.45" width="52" height="22" rx="4.5" fill="#fff"/><text x="362.70" y="620.51" font-size="13.6" fill="#1c1c6c" font-weight="normal" text-anchor="middle" letter-spacing="-0.4">15.42</text>
<rect x="369.50" y="678.36" width="44" height="22" rx="4.5" fill="#fff"/><text x="391.50" y="693.42" font-size="13.6" fill="#1c1c6c" font-weight="normal" text-anchor="middle" letter-spacing="-0.4">9.85</text>
<rect x="460.40" y="636.34" width="52" height="22" rx="4.5" fill="#fff"/><text x="486.40" y="651.40" font-size="13.6" fill="#1c1c6c" font-weight="normal" text-anchor="middle" letter-spacing="-0.4">13.06</text>
<rect x="493.20" y="698.91" width="44" height="22" rx="4.5" fill="#fff"/><text x="515.20" y="713.97" font-size="13.6" fill="#1c1c6c" font-weight="normal" text-anchor="middle" letter-spacing="-0.4">8.28</text>
<rect x="588.10" y="703.37" width="44" height="22" rx="4.5" fill="#fff"/><text x="610.10" y="718.42" font-size="13.6" fill="#1c1c6c" font-weight="normal" text-anchor="middle" letter-spacing="-0.4">7.94</text>
<rect x="612.90" y="638.70" width="52" height="22" rx="4.5" fill="#fff"/><text x="638.90" y="653.76" font-size="13.6" fill="#1c1c6c" font-weight="normal" text-anchor="middle" letter-spacing="-0.4">12.88</text>
<rect x="711.80" y="728.50" width="44" height="22" rx="4.5" fill="#fff"/><text x="733.80" y="743.56" font-size="13.6" fill="#1c1c6c" font-weight="normal" text-anchor="middle" letter-spacing="-0.4">6.02</text>
<rect x="736.60" y="624.56" width="52" height="22" rx="4.5" fill="#fff"/><text x="762.60" y="639.62" font-size="13.6" fill="#1c1c6c" font-weight="normal" text-anchor="middle" letter-spacing="-0.4">13.96</text>
<rect x="835.50" y="761.49" width="44" height="22" rx="4.5" fill="#fff"/><text x="857.50" y="776.54" font-size="13.6" fill="#1c1c6c" font-weight="normal" text-anchor="middle" letter-spacing="-0.4">3.50</text>
<rect x="860.30" y="592.62" width="52" height="22" rx="4.5" fill="#fff"/><text x="886.30" y="607.68" font-size="13.6" fill="#1c1c6c" font-weight="normal" text-anchor="middle" letter-spacing="-0.4">16.40</text>
<text x="988.80" y="538.05" font-size="16.6" fill="#fff" font-weight="bold" text-anchor="start" letter-spacing="0.13">All Requests on Time (%) by Hotel</text>
<line x1="1057.70" y1="556.6" x2="1057.70" y2="709" stroke="#c9d0d8" stroke-width="1" stroke-dasharray="1.5 4.3"/>
<text x="1057.70" y="725.40" font-size="14" fill="#fff" font-weight="normal" text-anchor="middle">0%</text>
<line x1="1211.24" y1="556.6" x2="1211.24" y2="709" stroke="#c9d0d8" stroke-width="1" stroke-dasharray="1.5 4.3"/>
<text x="1211.24" y="725.40" font-size="14" fill="#fff" font-weight="normal" text-anchor="middle">20%</text>
<line x1="1364.78" y1="556.6" x2="1364.78" y2="709" stroke="#c9d0d8" stroke-width="1" stroke-dasharray="1.5 4.3"/>
<text x="1364.78" y="725.40" font-size="14" fill="#fff" font-weight="normal" text-anchor="middle">40%</text>
<line x1="1518.32" y1="556.6" x2="1518.32" y2="709" stroke="#c9d0d8" stroke-width="1" stroke-dasharray="1.5 4.3"/>
<text x="1518.32" y="725.40" font-size="14" fill="#fff" font-weight="normal" text-anchor="middle">60%</text>
<line x1="1671.86" y1="556.6" x2="1671.86" y2="709" stroke="#c9d0d8" stroke-width="1" stroke-dasharray="1.5 4.3"/>
<text x="1671.86" y="725.40" font-size="14" fill="#fff" font-weight="normal" text-anchor="middle">80%</text>
<text x="995.20" y="580.18" font-size="14.2" fill="#fff" font-weight="normal" text-anchor="start">Hotel 02</text>
<rect x="1057.70" y="568.80" width="585.52" height="12.4" fill="#d4915c" stroke="#8a6a55" stroke-width="0.6"/>
<text x="995.20" y="608.38" font-size="14.2" fill="#fff" font-weight="normal" text-anchor="start">Hotel 04</text>
<rect x="1057.70" y="597.00" width="565.79" height="12.4" fill="#d4915c" stroke="#8a6a55" stroke-width="0.6"/>
<text x="995.20" y="637.18" font-size="14.2" fill="#fff" font-weight="normal" text-anchor="start">Hotel 01</text>
<rect x="1057.70" y="625.80" width="554.66" height="12.4" fill="#d4915c" stroke="#8a6a55" stroke-width="0.6"/>
<text x="995.20" y="665.38" font-size="14.2" fill="#fff" font-weight="normal" text-anchor="start">Hotel 05</text>
<rect x="1057.70" y="654.00" width="534.32" height="12.4" fill="#d4915c" stroke="#8a6a55" stroke-width="0.6"/>
<text x="995.20" y="694.18" font-size="14.2" fill="#fff" font-weight="normal" text-anchor="start">Hotel 03</text>
<rect x="1057.70" y="682.80" width="402.51" height="12.4" fill="#d4915c" stroke="#8a6a55" stroke-width="0.6"/>
<rect x="1636.20" y="563.70" width="62.8" height="22" rx="4.5" fill="#fff"/><text x="1667.60" y="578.76" font-size="13.6" fill="#1c1c6c" font-weight="normal" text-anchor="middle" letter-spacing="-0.4">76.27%</text>
<rect x="1627.99" y="591.90" width="62.8" height="22" rx="4.5" fill="#fff"/><text x="1659.39" y="606.96" font-size="13.6" fill="#1c1c6c" font-weight="normal" text-anchor="middle" letter-spacing="-0.4">73.70%</text>
<rect x="1616.86" y="620.70" width="62.8" height="22" rx="4.5" fill="#fff"/><text x="1648.26" y="635.76" font-size="13.6" fill="#1c1c6c" font-weight="normal" text-anchor="middle" letter-spacing="-0.4">72.25%</text>
<rect x="1596.52" y="648.90" width="62.8" height="22" rx="4.5" fill="#fff"/><text x="1627.92" y="663.96" font-size="13.6" fill="#1c1c6c" font-weight="normal" text-anchor="middle" letter-spacing="-0.4">69.60%</text>
<rect x="1464.71" y="677.70" width="62.8" height="22" rx="4.5" fill="#fff"/><text x="1496.11" y="692.76" font-size="13.6" fill="#1c1c6c" font-weight="normal" text-anchor="middle" letter-spacing="-0.4">52.43%</text>
<text x="995.80" y="783.05" font-size="16.6" fill="#fff" font-weight="bold" text-anchor="start">Time to Solve Client Requests and Time to Solve Staff Requests by Hotel</text>
<circle cx="1001.4" cy="808.7" r="6" fill="#cfad62" stroke="#6c6f78" stroke-width="1.4"/>
<text x="1010.00" y="813.96" font-size="13.6" fill="#fff" font-weight="normal" text-anchor="start" letter-spacing="-0.05">Time to Solve Client Requests</text>
<circle cx="1201.5" cy="808.7" r="6" fill="#45c18f" stroke="#6c6f78" stroke-width="1.4"/>
<text x="1210.30" y="813.96" font-size="13.6" fill="#fff" font-weight="normal" text-anchor="start" letter-spacing="-0.05">Time to Solve Staff Requests</text>
<line x1="1013" y1="982.60" x2="1710" y2="982.60" stroke="#c9d0d8" stroke-width="1" stroke-dasharray="1.5 4.3" stroke-linecap="butt"/>
<text x="1002.50" y="987.70" font-size="14" fill="#fff" font-weight="normal" text-anchor="end">0</text>
<line x1="1013" y1="894.20" x2="1710" y2="894.20" stroke="#c9d0d8" stroke-width="1" stroke-dasharray="1.5 4.3" stroke-linecap="butt"/>
<text x="1002.50" y="899.30" font-size="14" fill="#fff" font-weight="normal" text-anchor="end">5</text>
<rect x="1067.00" y="949.54" width="29.7" height="33.06" fill="#cfad62" stroke="#7f7466" stroke-width="1.2"/>
<rect x="1097.50" y="862.38" width="30" height="120.22" fill="#45c18f" stroke="#5e7f7a" stroke-width="1.2"/>
<text x="1099.80" y="1001.10" font-size="14" fill="#fff" font-weight="normal" text-anchor="middle">Hotel 03</text>
<rect x="1198.00" y="962.09" width="29.7" height="20.51" fill="#cfad62" stroke="#7f7466" stroke-width="1.2"/>
<rect x="1228.50" y="910.11" width="30" height="72.49" fill="#45c18f" stroke="#5e7f7a" stroke-width="1.2"/>
<text x="1230.80" y="1001.10" font-size="14" fill="#fff" font-weight="normal" text-anchor="middle">Hotel 02</text>
<rect x="1329.00" y="969.34" width="29.7" height="13.26" fill="#cfad62" stroke="#7f7466" stroke-width="1.2"/>
<rect x="1359.50" y="933.10" width="30" height="49.50" fill="#45c18f" stroke="#5e7f7a" stroke-width="1.2"/>
<text x="1361.80" y="1001.10" font-size="14" fill="#fff" font-weight="normal" text-anchor="middle">Hotel 01</text>
<rect x="1460.00" y="970.93" width="29.7" height="11.67" fill="#cfad62" stroke="#7f7466" stroke-width="1.2"/>
<rect x="1490.50" y="943.70" width="30" height="38.90" fill="#45c18f" stroke="#5e7f7a" stroke-width="1.2"/>
<text x="1492.80" y="1001.10" font-size="14" fill="#fff" font-weight="normal" text-anchor="middle">Hotel 05</text>
<rect x="1591.00" y="972.17" width="29.7" height="10.43" fill="#cfad62" stroke="#7f7466" stroke-width="1.2"/>
<rect x="1621.50" y="963.15" width="30" height="19.45" fill="#45c18f" stroke="#5e7f7a" stroke-width="1.2"/>
<text x="1623.80" y="1001.10" font-size="14" fill="#fff" font-weight="normal" text-anchor="middle">Hotel 04</text>
<rect x="1063.40" y="920.14" width="37" height="22" rx="4.5" fill="#fff"/><text x="1081.90" y="935.20" font-size="13.6" fill="#1c1c6c" font-weight="normal" text-anchor="middle" letter-spacing="-0.4">1.9</text>
<rect x="1094.00" y="832.98" width="37" height="22" rx="4.5" fill="#fff"/><text x="1112.50" y="848.03" font-size="13.6" fill="#1c1c6c" font-weight="normal" text-anchor="middle" letter-spacing="-0.4">6.8</text>
<rect x="1194.40" y="932.69" width="37" height="22" rx="4.5" fill="#fff"/><text x="1212.90" y="947.75" font-size="13.6" fill="#1c1c6c" font-weight="normal" text-anchor="middle" letter-spacing="-0.4">1.2</text>
<rect x="1225.00" y="880.71" width="37" height="22" rx="4.5" fill="#fff"/><text x="1243.50" y="895.77" font-size="13.6" fill="#1c1c6c" font-weight="normal" text-anchor="middle" letter-spacing="-0.4">4.1</text>
<rect x="1325.40" y="939.94" width="37" height="22" rx="4.5" fill="#fff"/><text x="1343.90" y="955.00" font-size="13.6" fill="#1c1c6c" font-weight="normal" text-anchor="middle" letter-spacing="-0.4">0.8</text>
<rect x="1356.00" y="903.70" width="37" height="22" rx="4.5" fill="#fff"/><text x="1374.50" y="918.75" font-size="13.6" fill="#1c1c6c" font-weight="normal" text-anchor="middle" letter-spacing="-0.4">2.8</text>
<rect x="1456.40" y="941.53" width="37" height="22" rx="4.5" fill="#fff"/><text x="1474.90" y="956.59" font-size="13.6" fill="#1c1c6c" font-weight="normal" text-anchor="middle" letter-spacing="-0.4">0.7</text>
<rect x="1487.00" y="914.30" width="37" height="22" rx="4.5" fill="#fff"/><text x="1505.50" y="929.36" font-size="13.6" fill="#1c1c6c" font-weight="normal" text-anchor="middle" letter-spacing="-0.4">2.2</text>
<rect x="1587.40" y="942.77" width="37" height="22" rx="4.5" fill="#fff"/><text x="1605.90" y="957.83" font-size="13.6" fill="#1c1c6c" font-weight="normal" text-anchor="middle" letter-spacing="-0.4">0.6</text>
<rect x="1618.00" y="933.75" width="37" height="22" rx="4.5" fill="#fff"/><text x="1636.50" y="948.81" font-size="13.6" fill="#1c1c6c" font-weight="normal" text-anchor="middle" letter-spacing="-0.4">1.1</text>
</svg>
<div class="t" style="left:41px;top:736.30px;font-size:37.4px;color:#b5622b;font-weight:normal;letter-spacing:-0.1px;width:317.5px;text-align:center;">10.77K</div>
<div class="t" style="left:39.5px;top:777.60px;font-size:18px;color:#14146e;font-weight:bold;letter-spacing:-0.25px;width:317.5px;text-align:center;">Client Requests</div>
<div class="t" style="left:389.5px;top:736.30px;font-size:37.4px;color:#b5622b;font-weight:normal;letter-spacing:0.8px;width:320px;text-align:center;">6240</div>
<div class="t" style="left:389px;top:777.60px;font-size:18px;color:#14146e;font-weight:bold;letter-spacing:-0.25px;width:320px;text-align:center;">Staff Requests</div>
</div>
<div id="botline"></div>
</body></html>
